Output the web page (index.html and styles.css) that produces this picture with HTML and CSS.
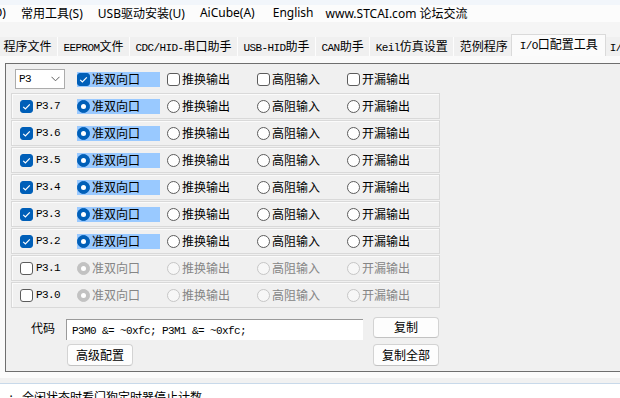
FILE: index.html
```html
<!DOCTYPE html>
<html>
<head>
<meta charset="utf-8">
<link rel="stylesheet" href="styles.css">
</head>
<body>
<div class="menubar">
  <span class="mi cut">O)</span>
  <span class="mi">常用工具(S)</span>
  <span class="mi">USB驱动安装(U)</span>
  <span class="mi">AiCube(A)</span>
  <span class="mi en">English</span>
  <span class="mi">www.STCAI.com 论坛交流</span>
</div>
<div class="tabbar">
  <div class="tab first">程序文件</div>
  <div class="tab"><span class="m">EEPROM</span>文件</div>
  <div class="tab"><span class="m">CDC/HID-</span>串口助手</div>
  <div class="tab"><span class="m">USB-HID</span>助手</div>
  <div class="tab"><span class="m">CAN</span>助手</div>
  <div class="tab"><span class="m">Keil</span>仿真设置</div>
  <div class="tab">范例程序</div>
  <div class="tab active"><span class="m">I/O</span>口配置工具</div>
  <div class="tab"><span class="m">I/</span></div>
</div>
<div class="page">
  <div class="panel">
    <div class="head">
      <div class="select"><span class="m">P3</span><svg class="chev" width="9" height="6" viewBox="0 0 9 6"><path d="M0.5 0.8 L4.5 4.8 L8.5 0.8" fill="none" stroke="#606060" stroke-width="1"/></svg></div>
      <div class="opts">
        <span class="opt hl"><i class="cb on"><svg width="13" height="13" viewBox="0 0 13 13"><path d="M3.2 6.8 L5.4 9 L9.8 4.4" fill="none" stroke="#fff" stroke-width="1.2"/></svg></i>准双向口</span>
        <span class="opt"><i class="cb"></i>推换输出</span>
        <span class="opt"><i class="cb"></i>高阻输入</span>
        <span class="opt"><i class="cb"></i>开漏输出</span>
      </div>
    </div>
    <div class="rows">
      <div class="row"><i class="cb on"><svg width="13" height="13" viewBox="0 0 13 13"><path d="M3.2 6.8 L5.4 9 L9.8 4.4" fill="none" stroke="#fff" stroke-width="1.2"/></svg></i><span class="pin m">P3.7</span>
        <div class="opts"><span class="opt hl"><i class="rd on"></i>准双向口</span><span class="opt"><i class="rd"></i>推换输出</span><span class="opt"><i class="rd"></i>高阻输入</span><span class="opt"><i class="rd"></i>开漏输出</span></div></div>
      <div class="row"><i class="cb on"><svg width="13" height="13" viewBox="0 0 13 13"><path d="M3.2 6.8 L5.4 9 L9.8 4.4" fill="none" stroke="#fff" stroke-width="1.2"/></svg></i><span class="pin m">P3.6</span>
        <div class="opts"><span class="opt hl"><i class="rd on"></i>准双向口</span><span class="opt"><i class="rd"></i>推换输出</span><span class="opt"><i class="rd"></i>高阻输入</span><span class="opt"><i class="rd"></i>开漏输出</span></div></div>
      <div class="row"><i class="cb on"><svg width="13" height="13" viewBox="0 0 13 13"><path d="M3.2 6.8 L5.4 9 L9.8 4.4" fill="none" stroke="#fff" stroke-width="1.2"/></svg></i><span class="pin m">P3.5</span>
        <div class="opts"><span class="opt hl"><i class="rd on"></i>准双向口</span><span class="opt"><i class="rd"></i>推换输出</span><span class="opt"><i class="rd"></i>高阻输入</span><span class="opt"><i class="rd"></i>开漏输出</span></div></div>
      <div class="row"><i class="cb on"><svg width="13" height="13" viewBox="0 0 13 13"><path d="M3.2 6.8 L5.4 9 L9.8 4.4" fill="none" stroke="#fff" stroke-width="1.2"/></svg></i><span class="pin m">P3.4</span>
        <div class="opts"><span class="opt hl"><i class="rd on"></i>准双向口</span><span class="opt"><i class="rd"></i>推换输出</span><span class="opt"><i class="rd"></i>高阻输入</span><span class="opt"><i class="rd"></i>开漏输出</span></div></div>
      <div class="row"><i class="cb on"><svg width="13" height="13" viewBox="0 0 13 13"><path d="M3.2 6.8 L5.4 9 L9.8 4.4" fill="none" stroke="#fff" stroke-width="1.2"/></svg></i><span class="pin m">P3.3</span>
        <div class="opts"><span class="opt hl"><i class="rd on"></i>准双向口</span><span class="opt"><i class="rd"></i>推换输出</span><span class="opt"><i class="rd"></i>高阻输入</span><span class="opt"><i class="rd"></i>开漏输出</span></div></div>
      <div class="row"><i class="cb on"><svg width="13" height="13" viewBox="0 0 13 13"><path d="M3.2 6.8 L5.4 9 L9.8 4.4" fill="none" stroke="#fff" stroke-width="1.2"/></svg></i><span class="pin m">P3.2</span>
        <div class="opts"><span class="opt hl"><i class="rd on"></i>准双向口</span><span class="opt"><i class="rd"></i>推换输出</span><span class="opt"><i class="rd"></i>高阻输入</span><span class="opt"><i class="rd"></i>开漏输出</span></div></div>
      <div class="row"><i class="cb"></i><span class="pin m">P3.1</span>
        <div class="opts dis"><span class="opt"><i class="rd on"></i>准双向口</span><span class="opt"><i class="rd"></i>推换输出</span><span class="opt"><i class="rd"></i>高阻输入</span><span class="opt"><i class="rd"></i>开漏输出</span></div></div>
      <div class="row"><i class="cb"></i><span class="pin m">P3.0</span>
        <div class="opts dis"><span class="opt"><i class="rd on"></i>准双向口</span><span class="opt"><i class="rd"></i>推换输出</span><span class="opt"><i class="rd"></i>高阻输入</span><span class="opt"><i class="rd"></i>开漏输出</span></div></div>
    </div>
    <div class="code">
      <span class="lbl">代码</span>
      <div class="input"><span class="m">P3M0 &amp;= ~0xfc; P3M1 &amp;= ~0xfc;</span></div>
      <button class="btn">复制</button>
      <span></span>
      <button class="btn adv">高级配置</button>
      <button class="btn tall">复制全部</button>
    </div>
  </div>
</div>
<div class="status">
  <div class="band1"></div>
  <div class="band2"></div>
  <div class="line"><span class="dot">·</span><span class="stxt">全闲状态时看门狗定时器停止计数</span></div>
</div>
</body>
</html>
```

FILE: styles.css
```css
html, body {
  margin: 0;
  padding: 0;
}
body {
  width: 620px;
  height: 398px;
  overflow: hidden;
  background: #fafafa;
  font-family: "Noto Sans", "Noto Sans CJK SC", sans-serif;
  font-size: 12px;
  color: #000;
}
.m {
  font-family: "Liberation Mono", "Noto Sans CJK SC", monospace;
  font-size: 11px;
  letter-spacing: -0.6px;
}
.menubar {
  height: 22px;
  background: linear-gradient(#f2f6fb 0 5px, #fcfcfc 5px);
  display: flex;
  align-items: center;
  gap: 15px;
  white-space: nowrap;
  padding-top: 3px;
  box-sizing: border-box;
}
.mi.cut {
  margin-left: -7px;
}
.mi.en {
  margin-left: 3px;
  margin-right: -3px;
}
.tabbar {
  height: 34px;
  background: #f5f5f5;
  display: flex;
  align-items: flex-end;
  white-space: nowrap;
}
.tab {
  height: 19px;
  line-height: 19px;
  padding: 0 5.5px;
  background: #f0f0f0;
  border-right: 1px solid #fdfdfd;
  flex: none;
}
.tab.first {
  margin-left: -2px;
}
.tab.active {
  height: 21px;
  line-height: 20px;
  padding: 0 7.5px;
  margin: 0 -2px 0 -3px;
  background: #fbfbfb;
  border: 1px solid #dadada;
  border-bottom: none;
  position: relative;
  z-index: 1;
}
.page {
  padding: 7px 0 0 5px;
  background: #fafafa;
}
.panel {
  width: 700px;
  height: 307px;
  background: #f0f0f0;
  border: 1px solid #6e6e6e;
  border-right: none;
}
.head {
  display: flex;
  align-items: center;
  padding: 5px 0 0 9px;
  height: 20px;
}
.select {
  width: 50px;
  height: 20px;
  box-sizing: border-box;
  border: 1px solid #acacac;
  background: #fff;
  display: flex;
  align-items: center;
  justify-content: space-between;
  padding: 0 4px 0 3px;
  margin-right: 12px;
}
.opts {
  display: flex;
}
.opt {
  width: 83px;
  height: 15px;
  margin-right: 7px;
  display: flex;
  align-items: center;
  gap: 2px;
  line-height: 15px;
}
.opt.hl {
  background: #99c9ff;
}
.cb, .rd {
  width: 13px;
  height: 13px;
  box-sizing: border-box;
  flex: none;
  display: inline-flex;
  align-items: center;
  justify-content: center;
  background: #fff;
  border: 1px solid #5c5c5c;
}
.cb {
  border-radius: 3px;
}
.cb.on {
  background: #005fb8;
  border-color: #005fb8;
}
.cb svg {
  display: block;
  margin: -1px;
}
.rd {
  border-radius: 50%;
}
.rd.on {
  background: #005fb8;
  border-color: #005fb8;
}
.rd.on::after {
  content: "";
  width: 5px;
  height: 5px;
  border-radius: 50%;
  background: #fff;
}
.opts.dis .opt {
  color: #858585;
}
.opts.dis .rd {
  border-color: #c6c6c6;
  background: #f7f7f7;
}
.opts.dis .rd.on {
  background: #c2c2c2;
  border-color: #c2c2c2;
}
.opts.dis .rd.on::after {
  background: #fff;
}
.rows {
  margin: 4px 0 0 5px;
  display: flex;
  flex-direction: column;
  gap: 1px;
}
.row {
  width: 429px;
  height: 26px;
  box-sizing: border-box;
  border: 1px solid #d9d9d9;
  box-shadow: inset 1px 1px 0 #fbfbfb;
  display: flex;
  align-items: center;
  padding-left: 8px;
}
.row .cb {
  margin-right: 3px;
}
.pin {
  width: 41px;
  line-height: 15px;
}
.code {
  margin-top: 9px;
  display: grid;
  grid-template-columns: 60px 307px 66px;
  grid-template-rows: 21px 22px;
  row-gap: 6px;
  align-items: start;
}
.lbl {
  padding-left: 25px;
  line-height: 22px;
  margin-top: 1px;
}
.input {
  width: 297px;
  height: 21px;
  margin-top: 2px;
  box-sizing: border-box;
  background: #fff;
  border-top: 1px solid #9a9a9a;
  border-left: 1px solid #9a9a9a;
  padding-left: 5px;
  line-height: 19px;
  white-space: nowrap;
}
.btn {
  font: inherit;
  color: #000;
  width: 66px;
  height: 21px;
  padding: 0;
  background: #fdfdfd;
  border: 1px solid #d3d3d3;
  border-bottom-color: #c2c2c2;
  border-radius: 4px;
  line-height: 19px;
}
.btn.adv {
  margin-left: 1px;
  height: 22px;
}
.btn.tall {
  height: 22px;
}
.status {
  background: #fff;
}
.band1 {
  height: 6px;
  background: #fbfbfb;
}
.band2 {
  height: 5px;
  background: #f1f1f1;
  border-bottom: 1px solid #c8d9ea;
}
.line {
  display: flex;
  align-items: center;
  height: 20px;
  padding-top: 2px;
  white-space: nowrap;
}
.dot {
  width: 22px;
  text-align: center;
}
.stxt {
  font-family: "Noto Sans CJK SC", sans-serif;
}
```
